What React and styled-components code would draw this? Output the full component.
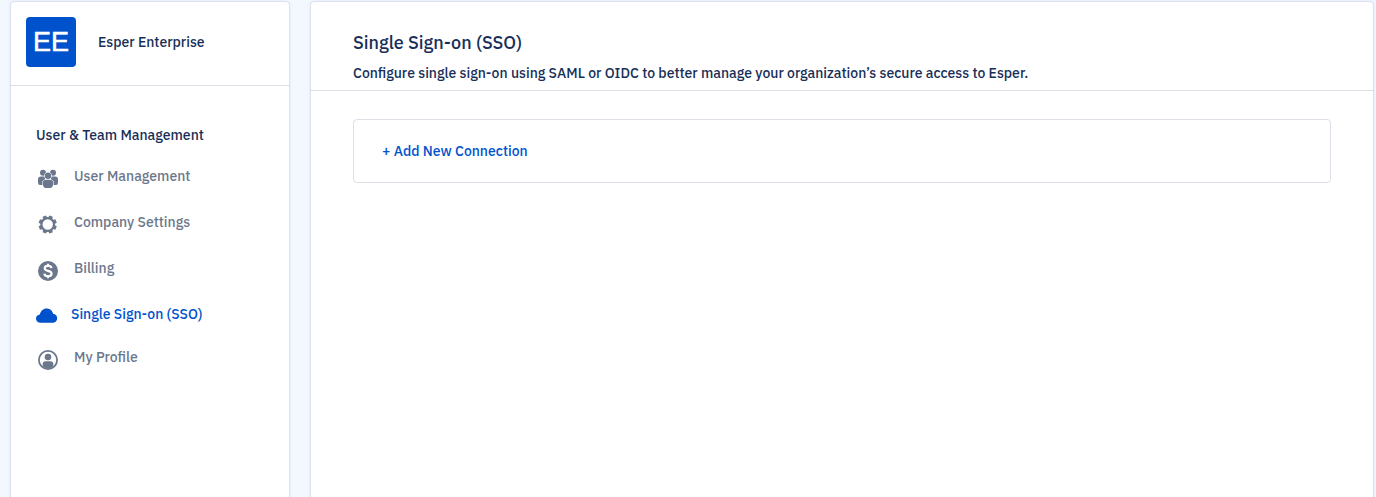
import React from 'react';
import styled, { createGlobalStyle } from 'styled-components';

const GlobalStyle = createGlobalStyle`
  *, *::before, *::after { box-sizing: border-box; }
  body { margin: 0; background: #f3f8ff; overflow: hidden; }
`;

const Page = styled.div`
  display: flex;
  gap: 20px;
  height: 100vh;
  padding: 1px 2px 0 10px;
  overflow: hidden;
  color: #172f58;
  font-family: "IBM Plex Sans", Roboto, "Liberation Sans", sans-serif;
  font-weight: 500;
  font-size: 14px;
  line-height: 20px;
`;

const Panel = styled.div`
  height: 520px;
  background: #fff;
  border: 1px solid #dce1ee;
  border-radius: 4px;
  box-shadow: 0 0 3px rgba(70, 100, 200, 0.12);
`;

const Sidebar = styled(Panel).attrs({ as: 'aside' })`
  flex: 0 0 280px;
`;

const Main = styled(Panel).attrs({ as: 'main' })`
  flex: 1;
`;

const Label = styled.span`
  display: block;
  width: max-content;
  white-space: nowrap;
`;

const Company = styled.header`
  display: flex;
  align-items: flex-start;
  gap: 22px;
  height: 84px;
  padding: 15px;
  border-bottom: 1px solid #dcdfe5;
  ${Label} { margin-top: 15px; }
`;

const Avatar = styled.div`
  display: flex;
  align-items: center;
  justify-content: center;
  width: 50px;
  height: 50px;
  border-radius: 4px;
  background: #0052cc;
  color: #fff;
  font: 400 27px/50px "Liberation Sans", Arial, sans-serif;
  -webkit-text-stroke: 0.5px #fff;
`;

const Nav = styled.nav`
  padding: 39px 25px 0;
`;

const NavList = styled.ul`
  list-style: none;
  margin: 21px 0 0;
  padding: 0;
`;

const NavItem = styled.li`
  display: flex;
  align-items: flex-start;
  gap: ${(p) => (p.$active ? 11 : 14)}px;
  height: ${(p) => (p.$active ? 43 : 46)}px;
  color: ${(p) => (p.$active ? '#0052cc' : '#6b778c')};
  svg { flex: none; margin-top: ${(p) => (p.$active ? 0 : 1)}px; }
`;

const PageHeader = styled.header`
  height: 89px;
  padding: 29px 42px 0;
  border-bottom: 1px solid #dcdfe5;
`;

const Title = styled.h1`
  margin: 0 0 8px;
  font-size: 18px;
  font-weight: 500;
  line-height: 24px;
`;

const ConnectionCard = styled.section`
  display: flex;
  align-items: center;
  height: 64px;
  margin: 28px 42px 0;
  padding: 0 28px;
  border: 1px solid #dddfe6;
  border-radius: 4px;
`;

const AddButton = styled.button`
  padding: 0;
  border: 0;
  background: none;
  color: #0052cc;
  font: inherit;
`;

const Icon = styled.svg.attrs({ width: 24, height: 24, viewBox: '0 0 24 24', fill: 'currentColor' })``;

const UsersIcon = () => (
  <Icon>
    <circle cx="7" cy="5.8" r="3" />
    <circle cx="17" cy="5.8" r="3" />
    <path d="M2 12.500Q2 9.500 5 9.500H9v8.500H4Q2 18 2 15.500Z" />
    <path d="M22 12.500Q22 9.500 19 9.500H15v8.500h5Q22 18 22 15.500Z" />
    <g stroke="#fff" strokeWidth="1.1" paintOrder="stroke">
      <circle cx="12" cy="8.7" r="3.2" />
      <path d="M10 12.800h4q3.200 0 3.200 3.200 0 5-3.200 5h-4q-3.200 0-3.200-5 0-3.200 3.200-3.200Z" />
    </g>
  </Icon>
);

const GearIcon = () => (
  <Icon>
    <circle cx="11.7" cy="11.5" r="6.3" fill="none" stroke="currentColor" strokeWidth="2.2" />
    {[22.5, 67.5, 112.5, 157.5, 202.5, 247.5, 292.5, 337.5].map((a) => (
      <path key={a} d="M9.500 5.200L9.900 2.400H13.500L13.900 5.200Z" transform={`rotate(${a} 11.7 11.5)`} />
    ))}
  </Icon>
);

const BillingIcon = () => (
  <Icon>
    <circle cx="12" cy="12" r="10" />
    <path
      d="M15.500 9.200C15.300 7.600 14 6.900 12.100 6.900 10 6.900 8.700 7.800 8.700 9.300c0 1.600 1.400 2.200 3.300 2.600 2.200.5 3.600 1.100 3.600 2.800 0 1.500-1.400 2.500-3.500 2.500-2.100 0-3.600-.9-3.800-2.600M12 4.700V7M12 17v2.300"
      fill="none"
      stroke="#fff"
      strokeWidth="2.1"
    />
  </Icon>
);

const CloudIcon = () => (
  <Icon>
    <path d="M4.600 18.700C1.800 18.700 0 17 0 14.500c0-2.300 1.600-3.800 3.800-4C4.700 6.900 7.100 4.400 10.600 4.400c3.400 0 5.900 2.100 6.500 5.400 2.500.2 4.100 2 4.100 4.400 0 2.700-1.900 4.500-4.700 4.500Z" />
  </Icon>
);

const ProfileIcon = () => (
  <Icon>
    <circle cx="12" cy="12" r="9.1" fill="none" stroke="currentColor" strokeWidth="1.8" />
    <circle cx="12" cy="9" r="3.3" />
    <path d="M6.700 18.500V16.200q0-3 3-3h4.600q3 0 3 3v2.300Q12 22.500 6.700 18.500Z" />
  </Icon>
);

const items = [
  { text: 'User Management', icon: <UsersIcon /> },
  { text: 'Company Settings', icon: <GearIcon /> },
  { text: 'Billing', icon: <BillingIcon /> },
  { text: 'Single Sign-on (SSO)', icon: <CloudIcon />, active: true },
  { text: 'My Profile', icon: <ProfileIcon /> },
];

export default function App() {
  return (
    <>
      <GlobalStyle />
      <Page>
        <Sidebar>
          <Company>
            <Avatar>EE</Avatar>
            <Label>Esper Enterprise</Label>
          </Company>
          <Nav>
            <Label>User &amp; Team Management</Label>
            <NavList>
              {items.map((item) => (
                <NavItem key={item.text} $active={item.active}>
                  {item.icon}
                  <Label>{item.text}</Label>
                </NavItem>
              ))}
            </NavList>
          </Nav>
        </Sidebar>
        <Main>
          <PageHeader>
            <Title>
              <Label>Single Sign-on (SSO)</Label>
            </Title>
            <Label>
              Configure single sign-on using SAML or OIDC to better manage your organization’s secure access to Esper.
            </Label>
          </PageHeader>
          <ConnectionCard>
            <AddButton type="button">
              <Label>+ Add New Connection</Label>
            </AddButton>
          </ConnectionCard>
        </Main>
      </Page>
    </>
  );
}
